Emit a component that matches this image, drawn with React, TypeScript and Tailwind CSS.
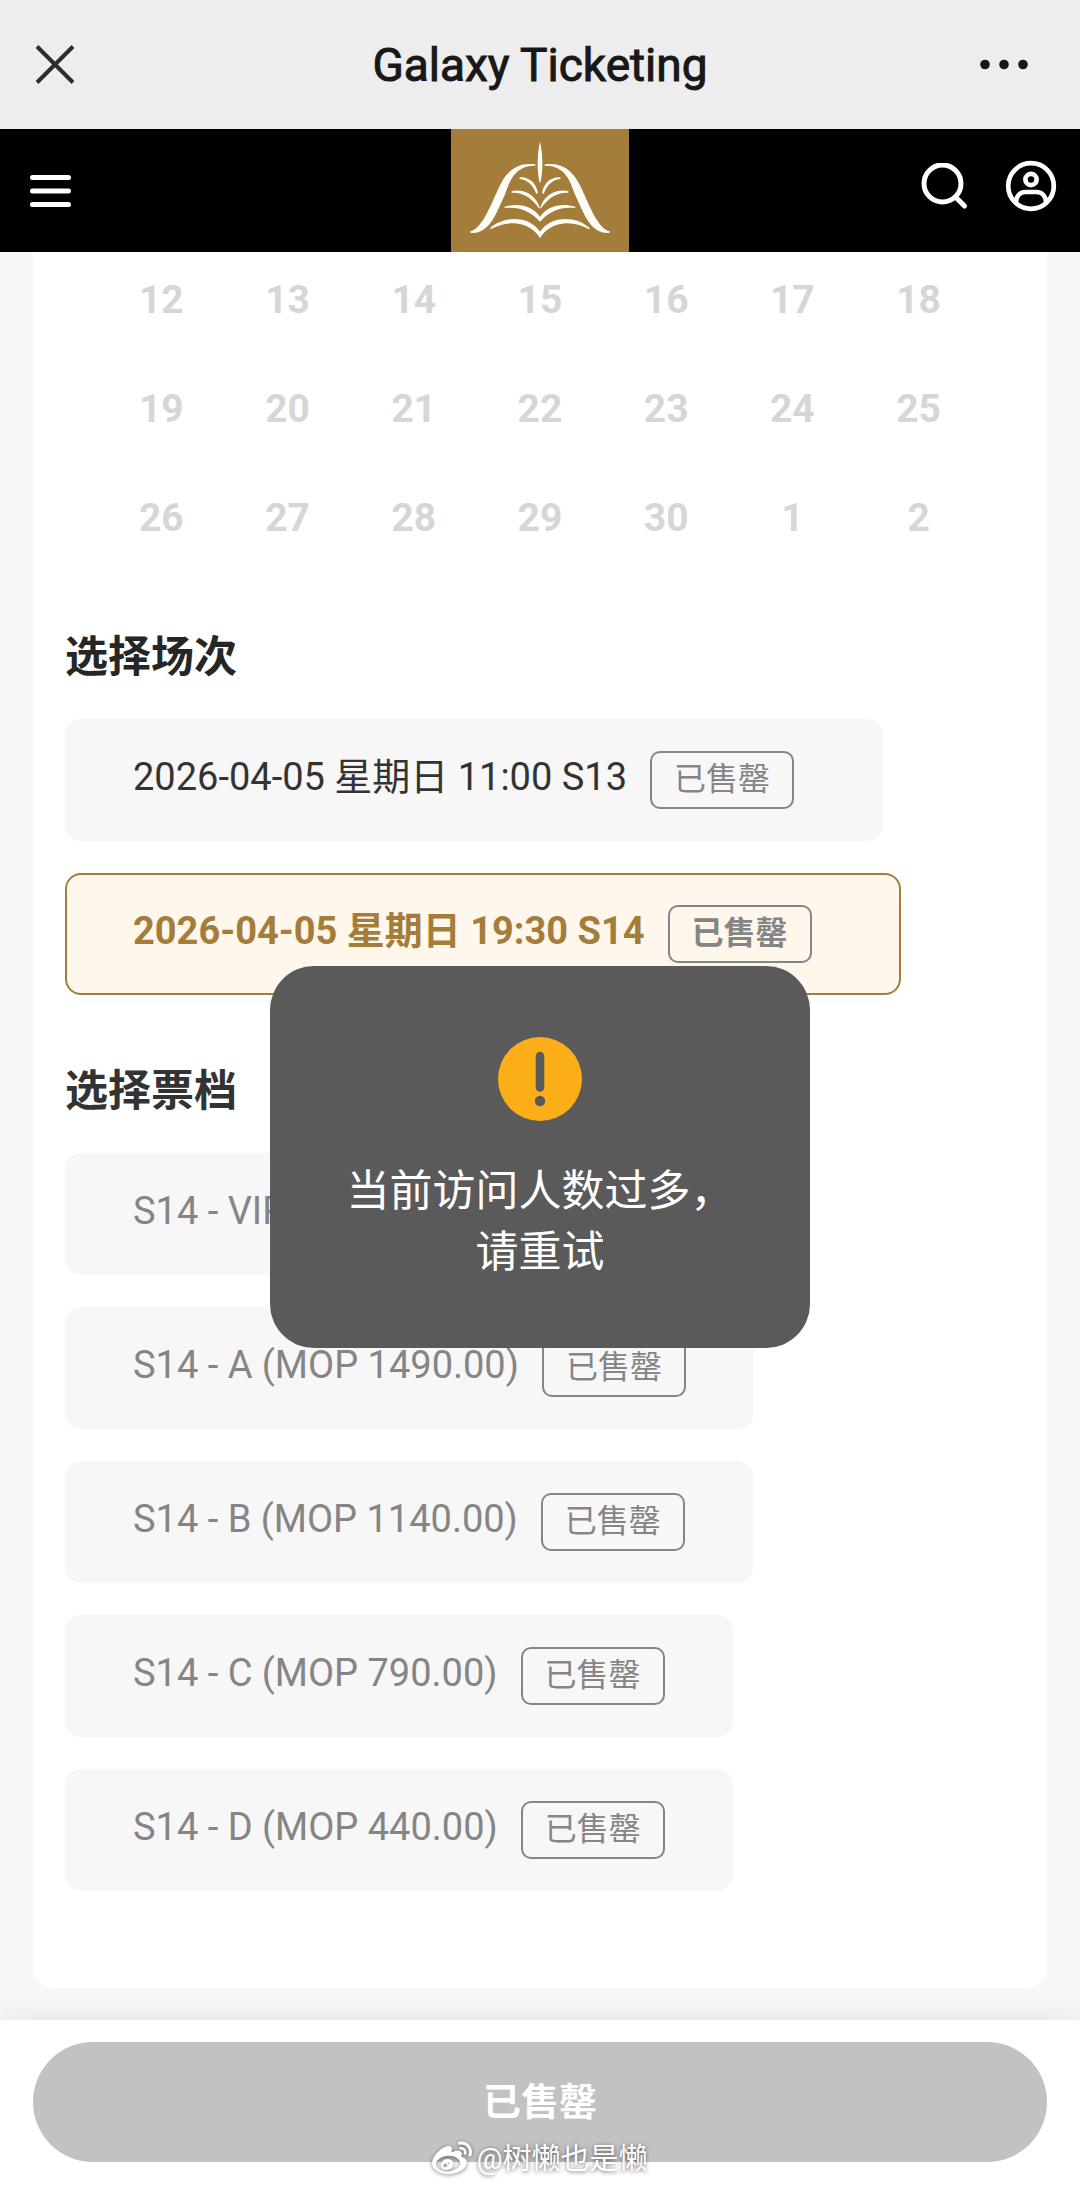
import { useState } from "react";
import { FaWeibo } from "react-icons/fa";

const weeks = [
  [12, 13, 14, 15, 16, 17, 18],
  [19, 20, 21, 22, 23, 24, 25],
  [26, 27, 28, 29, 30, 1, 2],
];

const sessions = ["2026-04-05 星期日 11:00 S13", "2026-04-05 星期日 19:30 S14"];

const tickets = [
  "S14 - VIP",
  "S14 - A (MOP 1490.00)",
  "S14 - B (MOP 1140.00)",
  "S14 - C (MOP 790.00)",
  "S14 - D (MOP 440.00)",
];

function TitleBar() {
  return (
    <div className="grid h-[129px] grid-cols-[1fr_auto_1fr] items-center bg-[#ededed] px-8 text-[#181818]">
      <button type="button" aria-label="Close" className="justify-self-start">
        <svg width="46" height="46" viewBox="0 0 46 46" fill="none" stroke="#2e2e2e" strokeWidth="4">
          <path d="M5 4.500 41 40.500M41 4.500 5 40.500" />
        </svg>
      </button>
      <h1 className="text-[46px] leading-[60px] font-normal [-webkit-text-stroke:1px_#181818]">Galaxy Ticketing</h1>
      <button type="button" aria-label="More" className="justify-self-end px-4">
        <svg width="56" height="46" viewBox="0 0 56 46" fill="#181818">
          <circle cx="9" cy="22.500" r="4.800" />
          <circle cx="28" cy="22.500" r="4.800" />
          <circle cx="47" cy="22.500" r="4.800" />
        </svg>
      </button>
    </div>
  );
}

function Logo() {
  return (
    <svg width="178" height="123" viewBox="33 27 534 369" role="img" aria-label="Galaxy">
      <rect x="33" y="27" width="534" height="369" fill="#a47d3b" />
      <g fill="#fffdf8">
        <path d="M300 65C307 90 311 150 301 188H299C289 150 293 90 300 65Z" />
        <g id="wing">
          <path d="M286 133C240 126 207 146 184 188C160 232 132 324 91 334L92 339C150 342 168 280 193 228C208 190 220 136 286 137Z" />
          <path d="M239 172C268 170 288 190 294 218L289 222C280 198 265 179 239 177Z" />
          <path d="M215 213C256 205 288 228 299 262L298 266C278 238 255 217 215 218Z" />
          <path d="M194 260C235 247 280 258 300 291V305C274 278 245 259 194 264Z" />
          <path d="M151 324C192 286 268 286 300 335V354C270 306 208 297 152 328Z" />
        </g>
        <use href="#wing" transform="matrix(-1 0 0 1 600 0)" />
      </g>
    </svg>
  );
}

function SiteHeader() {
  return (
    <header className="grid h-[123px] grid-cols-[1fr_auto_1fr] items-center bg-black">
      <button type="button" aria-label="Menu" className="ml-7 justify-self-start">
        <svg width="48" height="48" viewBox="0 0 48 48" stroke="#fff" strokeWidth="5" strokeLinecap="round">
          <path d="M4.500 10.500H40.500M4.500 24H40.500M4.500 37.500H40.500" />
        </svg>
      </button>
      <a href="#home">
        <Logo />
      </a>
      <div className="mr-5 flex items-center gap-8 justify-self-end">
        <button type="button" aria-label="Search">
          <svg width="56" height="56" viewBox="0 0 56 56" fill="none" stroke="#fff" strokeWidth="5" strokeLinecap="round">
            <circle cx="26.500" cy="20.500" r="18.500" />
            <path d="M40 34.500 48.500 43" />
          </svg>
        </button>
        <button type="button" aria-label="Account">
          <svg width="56" height="56" viewBox="0 0 56 56" fill="none" stroke="#fff" strokeWidth="4.700" className="overflow-visible">
            <circle cx="27" cy="23" r="22.800" />
            <circle cx="27" cy="16.500" r="5.600" />
            <path d="M12 39C12.500 32.500 16.500 29 21.500 29H32.500C37.500 29 41.500 32.500 42 39" />
          </svg>
        </button>
      </div>
    </header>
  );
}

function SoldOutBadge() {
  return (
    <span className="ml-[23px] rounded-[10px] border-2 border-[#858585] px-[22px] pt-[3px] pb-[5px] text-[32px] leading-[46px] text-[#858585]">
      已售罄
    </span>
  );
}

type OptionProps = {
  name: string;
  label: string;
  checked?: boolean;
  muted?: boolean;
  onSelect?: () => void;
};

function Option({ name, label, checked = false, muted = false, onSelect }: OptionProps) {
  return (
    <label
      className={
        "relative flex h-[122px] w-fit items-center rounded-2xl border-2 pl-[66px] text-[38px] whitespace-nowrap " +
        (muted
          ? "border-[#f7f7f7] bg-[#f7f7f7] pr-[66px] text-[#858585]"
          : checked
            ? "border-[#a47d3b] bg-[#fff7eb] pr-[87px] font-bold text-[#a47d3b]"
            : "border-[#f7f7f7] bg-[#f7f7f7] pr-[87px] text-[#333]")
      }
    >
      <input
        type="radio"
        name={name}
        className="sr-only"
        checked={checked}
        disabled={muted}
        onChange={() => onSelect?.()}
      />
      <span className="pb-1.5 leading-[54px]">{label}</span>
      <SoldOutBadge />
    </label>
  );
}

function Toast() {
  return (
    <div className="pointer-events-none absolute inset-0 flex items-center justify-center">
      <div
        role="alert"
        className="flex w-1/2 flex-col items-center rounded-[44px] bg-[#5a5a5a] pt-[71px] pb-[65px] text-white"
      >
        <svg width="84" height="84" viewBox="0 0 84 84">
          <circle cx="42" cy="42" r="42" fill="#fbae17" />
          <path d="M42 19V50.500" stroke="#5a5a5a" strokeWidth="8.500" strokeLinecap="round" />
          <circle cx="42" cy="64" r="5.200" fill="#5a5a5a" />
        </svg>
        <p className="mt-10 text-center text-[43px] leading-[61px]">
          当前访问人数过多，
          <br />
          请重试
        </p>
      </div>
    </div>
  );
}

export default function App() {
  const [session, setSession] = useState(1);

  return (
    <div className="flex min-h-screen flex-col bg-[#f7f7f7] font-['Roboto','Noto_Sans_CJK_SC',sans-serif]">
      <TitleBar />
      <div className="relative flex flex-1 flex-col">
        <SiteHeader />
        <main className="mx-[33px] mb-8 flex-1 rounded-b-[20px] bg-white px-8">
          <table className="mx-auto w-[93%] table-fixed text-[39px] font-bold text-[#d6d6d6]">
            <tbody>
              {weeks.map((week) => (
                <tr key={week[0]}>
                  {week.map((day) => (
                    <td key={day} className="h-[109px] p-0 pb-3 text-center">
                      <button type="button" disabled className="leading-[54px]">
                        {day}
                      </button>
                    </td>
                  ))}
                </tr>
              ))}
            </tbody>
          </table>

          <section>
            <h2 className="mt-12 text-[43px] leading-[60px] font-bold text-[#262626]">选择场次</h2>
            <div className="mt-8 flex flex-col gap-8">
              {sessions.map((label, i) => (
                <Option
                  key={label}
                  name="session"
                  label={label}
                  checked={session === i}
                  onSelect={() => setSession(i)}
                />
              ))}
            </div>
          </section>

          <section className="pb-20">
            <h2 className="mt-[66px] text-[43px] leading-[60px] font-bold text-[#333]">选择票档</h2>
            <div className="mt-8 flex flex-col gap-8">
              {tickets.map((label) => (
                <Option key={label} name="ticket" label={label} muted />
              ))}
            </div>
          </section>
        </main>

        <footer className="relative bg-white px-[33px] pt-[22px] pb-[23px] shadow-[0_0_32px_rgba(0,0,0,0.09)]">
          <button
            type="button"
            disabled
            className="h-[120px] w-full rounded-full bg-[#c2c2c2] text-[38px] font-bold text-white"
          >
            已售罄
          </button>
          <div className="pointer-events-none absolute inset-x-0 bottom-1 flex items-center justify-center gap-1 text-[29px] leading-[44px] text-white">
            <FaWeibo className="size-10 drop-shadow-[0_1px_2px_rgba(0,0,0,0.5)]" />
            <span className="[text-shadow:0_1px_4px_rgba(0,0,0,0.6)]">@树懒也是懒</span>
          </div>
        </footer>
        <Toast />
      </div>
    </div>
  );
}
